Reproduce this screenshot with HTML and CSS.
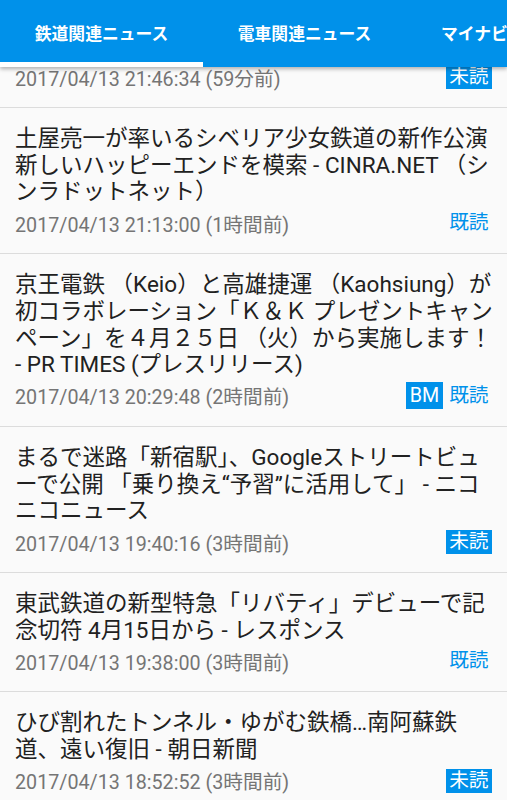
FILE: index.html
```html
<!DOCTYPE html>
<html lang="ja">
<head>
<meta charset="utf-8">
<title>鉄道関連ニュース</title>
<link rel="stylesheet" href="styles.css">
</head>
<body>
<header class="tabbar">
  <nav class="tabs">
    <div class="tab tab-active">鉄道関連ニュース</div>
    <div class="tab">電車関連ニュース</div>
    <div class="tab">マイナビニュース</div>
  </nav>
</header>
<main class="list">
  <article class="item item-partial">
    <div class="meta">
      <span class="time">2017/04/13 21:46:34 (59分前)</span>
      <span class="flags"><span class="flag flag-fill">未読</span></span>
    </div>
  </article>
  <article class="item">
    <h2 class="title">土屋亮一が率いるシベリア少女鉄道の新作公演新しいハッピーエンドを模索 - CINRA.NET （シンラドットネット）</h2>
    <div class="meta">
      <span class="time">2017/04/13 21:13:00 (1時間前)</span>
      <span class="flags"><span class="flag">既読</span></span>
    </div>
  </article>
  <article class="item">
    <h2 class="title">京王電鉄 （Keio）と高雄捷運 （Kaohsiung）が初コラボレーション「Ｋ＆Ｋ プレゼントキャンペーン」を４月２５日 （火）から実施します！ - PR TIMES (プレスリリース)</h2>
    <div class="meta">
      <span class="time">2017/04/13 20:29:48 (2時間前)</span>
      <span class="flags"><span class="flag flag-fill flag-bm">BM</span><span class="flag">既読</span></span>
    </div>
  </article>
  <article class="item">
    <h2 class="title">まるで迷路「新宿駅」、Googleストリートビューで公開 「乗り換え“予習”に活用して」 - ニコニコニュース</h2>
    <div class="meta">
      <span class="time">2017/04/13 19:40:16 (3時間前)</span>
      <span class="flags"><span class="flag flag-fill">未読</span></span>
    </div>
  </article>
  <article class="item">
    <h2 class="title">東武鉄道の新型特急「リバティ」デビューで記念切符 4月15日から - レスポンス</h2>
    <div class="meta">
      <span class="time">2017/04/13 19:38:00 (3時間前)</span>
      <span class="flags"><span class="flag">既読</span></span>
    </div>
  </article>
  <article class="item">
    <h2 class="title">ひび割れたトンネル・ゆがむ鉄橋…南阿蘇鉄道、遠い復旧 - 朝日新聞</h2>
    <div class="meta">
      <span class="time">2017/04/13 18:52:52 (3時間前)</span>
      <span class="flags"><span class="flag flag-fill">未読</span></span>
    </div>
  </article>
</main>
</body>
</html>
```
FILE: styles.css
```css
html, body {
  margin: 0;
  padding: 0;
}

body {
  width: 507px;
  height: 800px;
  overflow: hidden;
  background: #fafafa;
  font-family: Roboto, "Noto Sans CJK JP", sans-serif;
}

.tabbar {
  position: relative;
  z-index: 2;
  height: 67px;
  background: #0091ea;
  overflow: hidden;
  box-shadow: 0 2px 4px rgba(0, 0, 0, 0.3);
}

.tabs {
  display: flex;
  height: 100%;
}

.tab {
  flex: 0 0 203px;
  display: flex;
  align-items: center;
  justify-content: center;
  padding-bottom: 1px;
  color: #ffffff;
  font-size: 16.8px;
  font-weight: 700;
  white-space: nowrap;
}

.tab-active {
  box-shadow: inset 0 -5px 0 #ffffff;
}

.item {
  padding: 17px 15px 17px;
  border-bottom: 1px solid #dcdcdc;
}

.item-partial {
  margin-top: -8px;
  padding-top: 0;
}

.title {
  margin: 0 -5px 0 0;
  font-size: 22.5px;
  line-height: 26.7px;
  font-weight: 400;
  color: #212121;
  line-break: normal;
}

.meta {
  display: flex;
  justify-content: space-between;
  align-items: center;
  height: 26px;
  margin-top: 5px;
}

.time {
  font-size: 19.7px;
  color: #757575;
  white-space: nowrap;
}

.flags {
  display: flex;
  align-items: center;
  gap: 3px;
}

.flag {
  font-size: 19.7px;
  line-height: 24px;
  padding: 0 3.5px;
  color: #0091ea;
}

.flag-fill {
  background: #0091ea;
  color: #ffffff;
}

.flag-bm {
  line-height: 27px;
}
```
